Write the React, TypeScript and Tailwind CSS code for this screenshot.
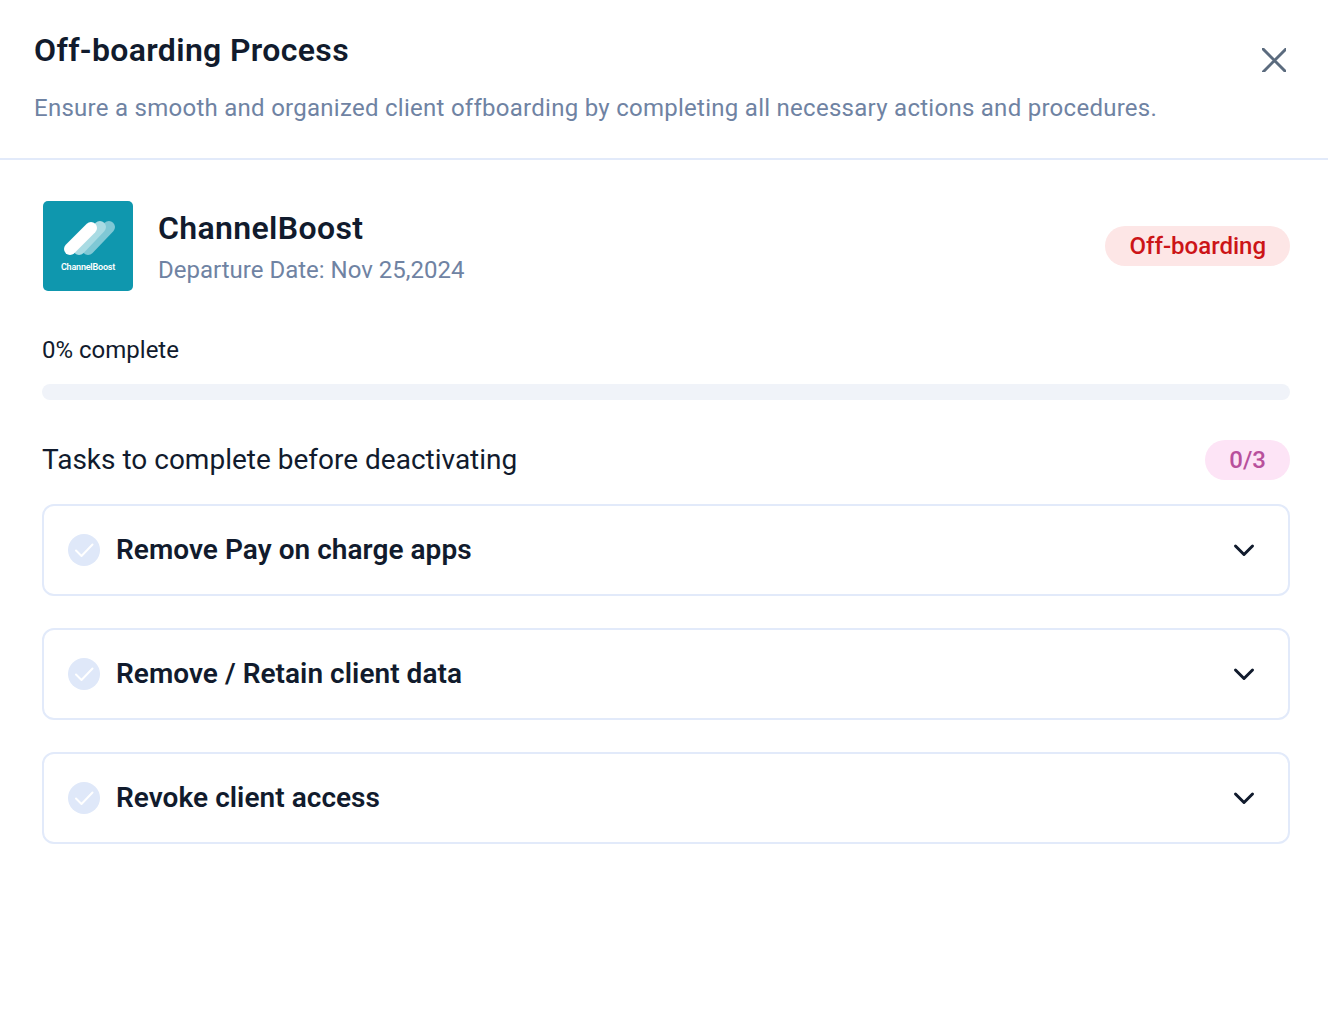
import React from 'react';

const tasks = ['Remove Pay on charge apps', 'Remove / Retain client data', 'Revoke client access'];

const Logo = () => (
  <svg width="90" height="90" viewBox="0 0 90 90" className="ml-[1px] shrink-0">
    <rect width="90" height="90" rx="5" fill="#0f97ae" />
    <line x1="45" y1="48" x2="66" y2="26" stroke="#7fc8d5" strokeWidth="12" strokeLinecap="round" />
    <line x1="36" y1="48" x2="57" y2="26" stroke="#a9dbe3" strokeWidth="12" strokeLinecap="round" />
    <line x1="27" y1="48" x2="48" y2="27" stroke="#ffffff" strokeWidth="12" strokeLinecap="round" />
    <text x="45" y="69" textAnchor="middle" fontSize="9" fontWeight="600" fill="#ffffff" letterSpacing="-0.2">
      ChannelBoost
    </text>
  </svg>
);

const TaskRow = ({ label }: { label: string }) => (
  <div className="h-[92px] rounded-[12px] border-2 border-[#e2eafa] flex items-center pl-[24px] pr-[32px]">
    <svg width="32" height="32" viewBox="0 0 32 32" fill="none" stroke="#ffffff" strokeWidth="2" strokeLinecap="round" strokeLinejoin="round">
      <circle cx="16" cy="16" r="16" fill="#dfe8f9" stroke="none" />
      <path d="M8 16.5l5.5 5.5L24.5 10.5" />
    </svg>
    <span className="ml-4 text-[28px] leading-8 font-semibold tracking-[0.04px] text-[#111b2d] flex-1">{label}</span>
    <svg width="24" height="24" viewBox="0 0 24 24" fill="none" stroke="#111b2d" strokeWidth="3" strokeLinecap="round" strokeLinejoin="round">
      <path d="M3.5 8l8.5 8.5L20.5 8" />
    </svg>
  </div>
);

export default function App() {
  return (
    <div className="min-h-[1012px] bg-white font-['Roboto',sans-serif]">
      <header className="h-[160px] border-b-2 border-[#e2eafa] pl-[34px] pr-[42px] flex justify-between">
        <div>
          <h1 className="mt-[30px] text-[32px] leading-10 font-semibold tracking-[0.35px] text-[#111b2d]">Off-boarding Process</h1>
          <p className="mt-[20px] text-[24px] leading-[36px] tracking-[0.27px] text-[#6f83a3]">
            Ensure a smooth and organized client offboarding by completing all necessary actions and procedures.
          </p>
        </div>
        <svg width="24" height="24" viewBox="0 0 24 24" fill="none" stroke="#5b6b7e" strokeWidth="3" strokeLinecap="round" className="mt-[48px]">
          <path d="M1 1l23 23M24 1L1 24" />
        </svg>
      </header>
      <main className="pl-[42px] pr-[38px]">
        <section className="mt-[41px] flex items-center justify-between">
          <div className="flex items-center">
            <Logo />
            <div className="ml-[25px] pt-[2px]">
              <h2 className="text-[32px] leading-10 font-semibold tracking-[0.36px] text-[#111b2d]">ChannelBoost</h2>
              <p className="mt-[6px] text-[24px] leading-8 text-[#6f83a3]">Departure Date: Nov 25,2024</p>
            </div>
          </div>
          <span className="h-10 rounded-full bg-[#fde6e6] px-6 flex items-center text-[24px] font-medium text-[#cc1417]">Off-boarding</span>
        </section>
        <p className="mt-[41px] text-[24px] leading-[36px] text-[#111b2d]">0% complete</p>
        <div className="mt-[16px] h-4 rounded-full bg-[#f0f3f9]" />
        <div className="mt-[40px] flex items-center justify-between">
          <span className="text-[28px] leading-10 text-[#111b2d]">Tasks to complete before deactivating</span>
          <span className="h-10 rounded-full bg-[#fde4f6] px-6 flex items-center text-[24px] font-medium text-[#b8509c]">0/3</span>
        </div>
        <div className="mt-6 flex flex-col gap-8">
          {tasks.map((t) => (
            <TaskRow key={t} label={t} />
          ))}
        </div>
      </main>
    </div>
  );
}
